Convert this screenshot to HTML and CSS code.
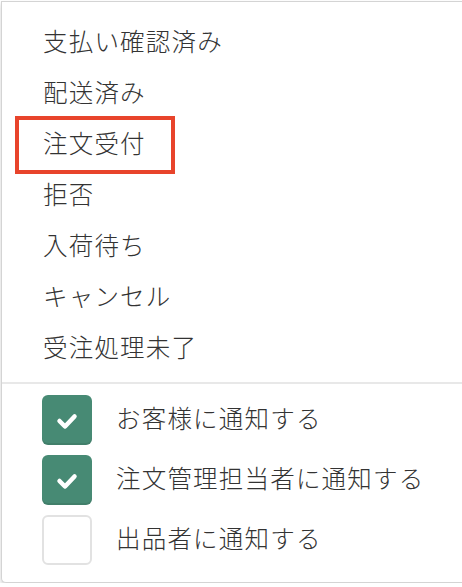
FILE: index.html
```html
<!DOCTYPE html>
<html lang="ja">
<head>
<meta charset="utf-8">
<link rel="stylesheet" href="styles.css">
</head>
<body>
<div class="panel">
  <ul class="status-list">
    <li class="item">支払い確認済み</li>
    <li class="item">配送済み</li>
    <li class="item item--marked">注文受付</li>
    <li class="item">拒否</li>
    <li class="item">入荷待ち</li>
    <li class="item">キャンセル</li>
    <li class="item">受注処理未了</li>
  </ul>
  <div class="divider"></div>
  <div class="checks">
    <label class="check">
      <span class="box box--on"><svg viewBox="0 0 50 50" width="50" height="50"><polyline points="17.5,26 23,31.5 32.5,21.5" fill="none" stroke="#fff" stroke-width="4.5" stroke-linecap="round" stroke-linejoin="round"/></svg></span>
      <span class="label">お客様に通知する</span>
    </label>
    <label class="check">
      <span class="box box--on"><svg viewBox="0 0 50 50" width="50" height="50"><polyline points="17.5,26 23,31.5 32.5,21.5" fill="none" stroke="#fff" stroke-width="4.5" stroke-linecap="round" stroke-linejoin="round"/></svg></span>
      <span class="label">注文管理担当者に通知する</span>
    </label>
    <label class="check">
      <span class="box box--off"></span>
      <span class="label">出品者に通知する</span>
    </label>
  </div>
</div>
</body>
</html>
```
FILE: styles.css
```css
html, body {
  margin: 0;
  padding: 0;
  background: #ffffff;
  overflow: hidden;
}
body {
  font-family: "Noto Sans CJK JP", "Noto Sans", sans-serif;
  font-weight: 300;
  color: #333333;
}
.panel {
  margin: 1px 0 0 1px;
  width: 480px;
  box-sizing: border-box;
  border: 1px solid #d4d4d4;
  border-right: none;
  border-radius: 0 0 0 5px;
  box-shadow: 0 3px 5px rgba(0,0,0,0.18);
  background: #fff;
  padding-bottom: 17px;
}
.status-list {
  list-style: none;
  margin: 0;
  padding: 14px 0 9px 0;
}
.item {
  position: relative;
  height: 49px;
  padding-bottom: 2px;
  line-height: 49px;
  font-size: 24.5px;
  padding-left: 41px;
  letter-spacing: 1.2px;
}
.item--marked::after {
  content: "";
  position: absolute;
  left: 13px;
  top: -2px;
  width: 160px;
  height: 58px;
  box-sizing: border-box;
  border: 4px solid #e8442b;
}
.divider {
  height: 2px;
  background: #e8e8e8;
}
.checks {
  display: flex;
  flex-direction: column;
  gap: 10px;
  padding: 11px 0 0 40px;
}
.check {
  display: flex;
  align-items: center;
  gap: 24px;
  height: 50px;
}
.box {
  width: 50px;
  height: 50px;
  box-sizing: border-box;
  border-radius: 6px;
  flex: none;
  display: block;
}
.box svg { display: block; }
.box--on {
  background: #478a74;
  box-shadow: inset 0 -2px 0 rgba(0,0,0,0.08);
}
.box--off {
  border: 2px solid #e2e2e2;
  background: #fff;
}
.label {
  font-size: 24.5px;
  letter-spacing: 1.2px;
  line-height: 46px;
  padding-bottom: 4px;
}
```
